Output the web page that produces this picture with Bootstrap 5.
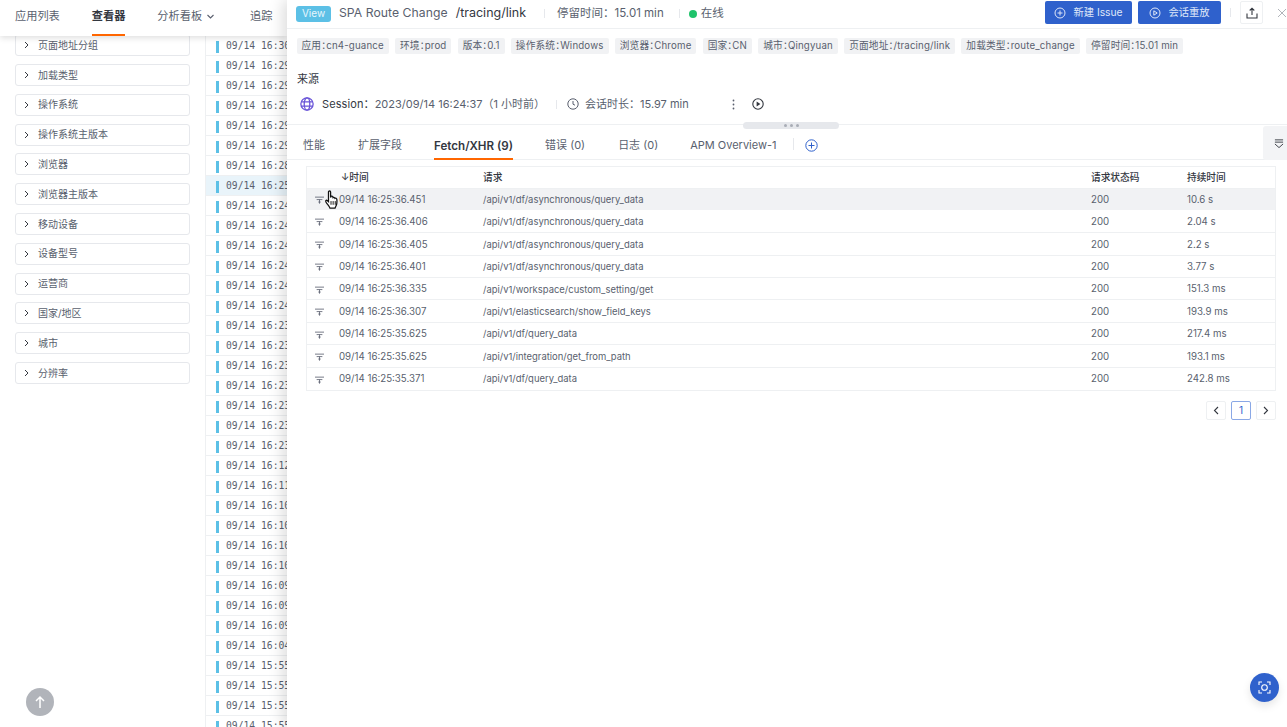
<!DOCTYPE html>
<html lang="zh-CN">
<head>
  <meta charset="UTF-8">
  <meta name="viewport" content="width=device-width, initial-scale=1.0">
  <title>查看器</title>
  <link href="https://cdn.jsdelivr.net/npm/bootstrap@5.3.3/dist/css/bootstrap.min.css" rel="stylesheet">
  <style>
    html, body { height: 727px; overflow: hidden; }
    body { font-family: Inter, "Noto Sans CJK SC", sans-serif; font-size: 10.5px; color: #595f6e; background: #fff; position: relative; }
    svg { display: block; flex: none; }

    /* top nav */
    .top-nav { position: absolute; left: 0; top: 0; width: 287px; height: 36px; background: #fff; box-shadow: 0 2px 6px rgba(0,0,0,.13); z-index: 2; font-size: 11.2px; }
    .top-item { height: 36px; line-height: 33px; white-space: nowrap; }
    .top-item.on { color: #33373f; font-weight: 600; border-bottom: 2px solid #ff6600; }

    /* left filters */
    .filter-side { width: 205px; flex: none; padding: 34.3px 15px 0; }
    .filter-box { height: 22px; margin-bottom: 7.8px; border: 1px solid #e6e8ec; border-radius: 3px; padding-left: 8px; gap: 9px; font-size: 10px; }

    /* log list */
    .log-side { width: 82px; flex: none; padding-top: 36px; border-left: 1px solid #eef0f2; }
    .log-row { height: 20px; padding: 2px 0 0 10px; gap: 7px; border-bottom: 1px solid #eef0f2; font-family: "DejaVu Sans Mono", monospace; font-size: 9.7px; white-space: pre; }
    .log-row.sel { background: #e9f4fa; }
    .log-bar { width: 3px; height: 12px; flex: none; background: #5cc0e6; }

    /* drawer */
    .drawer { position: absolute; left: 287px; top: 0; width: 1000px; height: 727px; background: #fff; box-shadow: -4px 0 14px rgba(0,0,0,.14); z-index: 3; }
    .drawer-head { height: 29px; padding: 0 0 1px 9px; border-bottom: 1px solid #eef0f2; font-size: 11.5px; white-space: nowrap; }
    .view-tag { width: 35px; height: 16px; line-height: 15px; margin-right: 8px; text-align: center; color: #e8f6fc; background: #5cc0e6; border-radius: 3px; font-size: 10px; }
    .head-title { font-size: 12.2px; letter-spacing: .05px; }
    .head-path { font-size: 12.5px; color: #33373f; margin-left: 8px; }
    .head-sep { width: 1px; height: 9px; background: #e6e8ec; }
    .online-dot { width: 8px; height: 8px; border-radius: 50%; background: #1fc36b; }
    .head-right { align-self: flex-start; margin-top: 1px; }
    .blue-btn { height: 23px; padding: 0; gap: 7px; border-radius: 2px; background: #2f61cc; color: #dfe7f8; border: 0; font-size: 10.3px; }
    .share-btn { width: 23px; height: 23px; border: 1px solid #eef0f2; border-radius: 2px; }
    .sep-a { margin-left: 18px; }
    .stay-text { margin-left: 12px; }
    .sep-b { margin-left: 15px; }
    .dot-gap { margin-left: 9px; }
    .online-text { margin-left: 4px; }

    .tag-row { padding: 9px 0 0 9.5px; gap: 6.2px; white-space: nowrap; }
    .field-tag { height: 16px; line-height: 16px; padding: 0 5px; background: #f1f2f4; border-radius: 2px; font-size: 9.7px; letter-spacing: .16px; font-feature-settings: "halt"; }
    .src-title { margin: 17px 0 0 10px; font-size: 11px; color: #33373f; line-height: 16px; }
    .src-row { height: 20px; margin-top: 7px; padding-left: 13px; font-size: 11px; white-space: nowrap; }
    .src-label { margin-left: 8px; color: #33373f; letter-spacing: .1px; }

    .drag-bar { height: 0; border-top: 1px solid #eef0f2; margin-top: 10px; position: relative; }
    .drag-handle { position: absolute; left: 456px; top: -3px; width: 96px; height: 7px; border-radius: 4px; background: #e6e8ec; gap: 3px; }
    .drag-handle i { width: 3px; height: 3px; border-radius: 50%; background: #a9adb6; }

    .tab-row { height: 35px; border-bottom: 1px solid #eef0f2; padding-left: 16px; font-size: 11px; white-space: nowrap; position: relative; }
    .tab-item { height: 35px; line-height: 41px; }
    .tab-item.on { color: #33373f; font-weight: 600; font-size: 11.6px; line-height: 42px; border-bottom: 2px solid #ff6600; }
    .collapse-tab { position: absolute; right: 0; top: 1px; width: 24px; height: 34px; padding-right: 3px; background: #f3f4f6; border-radius: 3px 0 0 3px; }

    .trace-wrap { margin: 6px 11px 0 19px; border: 1px solid #eef0f2; }
    .trace-table { width: 100%; margin: 0; table-layout: fixed; font-size: 9.7px; color: #595f6e; }
    .trace-table th, .trace-table td { padding: 2px 0 0; border-bottom: 1px solid #eef0f2; vertical-align: middle; white-space: nowrap; background: transparent; color: inherit; box-shadow: none; }
    .trace-table th { height: 21px; font-weight: 500; color: #33373f; }
    .trace-table td { height: 22.4px; }
    .trace-table tr:last-child td { border-bottom: 0; }
    .trace-table tr.hot td { background: #f1f2f4; border-bottom: 0; }
    .row-icon { padding-left: 8px !important; }
    .path-cell { font-size: 9.45px; }
    .sort-head { margin-left: 2px; }

    .pager { margin: 10px 11px 0 0; gap: 5px; }
    .pager-btn { width: 20px; height: 19px; border: 1px solid #eef0f2; border-radius: 2px; font-size: 10px; }
    .pager-btn.on { border-color: #8aa8e6; color: #2f61cc; }

    .hand-cursor { position: absolute; left: 325px; top: 190px; z-index: 5; }
    .up-btn { position: absolute; left: 26px; top: 688px; width: 28px; height: 28px; border-radius: 50%; background: #b1b4ba; z-index: 1; }
    .scan-btn { position: absolute; left: 1250px; top: 673px; width: 29px; height: 29px; border-radius: 50%; background: #2f61cc; box-shadow: 0 4px 8px rgba(0,0,0,.1); z-index: 5; }
  </style>
</head>
<body>
  <div class="top-nav d-flex">
    <div class="top-item" style="margin-left:15px">应用列表</div>
    <div class="top-item on" style="margin-left:32px">查看器</div>
    <div class="top-item d-flex" style="margin-left:32px">分析看板
      <svg width="9" height="33" viewBox="0 0 9 33" style="margin-left:4px"><path d="M1.5 15l3 3 3-3" fill="none" stroke="#595f6e" stroke-width="1.1"/></svg>
    </div>
    <div class="top-item" style="margin-left:35px">追踪</div>
  </div>

  <div class="d-flex">
    <div class="filter-side" id="filters"></div>
    <div class="log-side" id="logs"></div>
  </div>

  <div class="up-btn d-flex align-items-center justify-content-center">
    <svg width="12" height="14" viewBox="0 0 12 14"><path d="M6 13V2M2 6l4-4 4 4" fill="none" stroke="#fff" stroke-width="1.5"/></svg>
  </div>

  <div class="drawer">
    <div class="drawer-head d-flex align-items-center">
      <span class="view-tag">View</span>
      <span class="head-title">SPA Route Change</span>
      <span class="head-path">/tracing/link</span>
      <span class="head-sep sep-a"></span>
      <span class="stay-text">停留时间：15.01 min</span>
      <span class="head-sep sep-b"></span>
      <span class="online-dot dot-gap"></span>
      <span class="online-text">在线</span>
      <div class="head-right d-flex align-items-center ms-auto">
        <button class="btn blue-btn d-flex align-items-center justify-content-center" style="width:87px">
          <svg width="12" height="12" viewBox="0 0 12 12"><circle cx="6" cy="6" r="5" fill="none" stroke="#dfe7f8"/><path d="M6 3.5v5M3.5 6h5" stroke="#dfe7f8"/></svg>新建 Issue
        </button>
        <button class="btn blue-btn d-flex align-items-center justify-content-center" style="width:83px;margin-left:6px">
          <svg width="12" height="12" viewBox="0 0 12 12"><circle cx="6" cy="6" r="5" fill="none" stroke="#dfe7f8"/><path d="M4.8 3.8v4.4L8.2 6z" fill="none" stroke="#dfe7f8"/></svg>会话重放
        </button>
        <span class="head-sep" style="margin:0 9px"></span>
        <div class="share-btn d-flex align-items-center justify-content-center">
          <svg width="12" height="12" viewBox="0 0 12 12"><path d="M1 6.5V11h10V6.5M6 8V1.3M3.7 3.5L6 1.2l2.3 2.3" fill="none" stroke="#33373f" stroke-width="1.1"/></svg>
        </div>
        <svg width="10" height="10" viewBox="0 0 10 10" style="margin-left:14px"><path d="M1 1l8 8M9 1l-8 8" stroke="#b1b4ba" stroke-width="1"/></svg>
      </div>
    </div>

    <div class="tag-row d-flex">
      <span class="field-tag">应用：cn4-guance</span>
      <span class="field-tag">环境：prod</span>
      <span class="field-tag">版本：0.1</span>
      <span class="field-tag">操作系统：Windows</span>
      <span class="field-tag">浏览器：Chrome</span>
      <span class="field-tag">国家：CN</span>
      <span class="field-tag">城市：Qingyuan</span>
      <span class="field-tag">页面地址：/tracing/link</span>
      <span class="field-tag">加载类型：route_change</span>
      <span class="field-tag">停留时间：15.01 min</span>
    </div>

    <div class="src-title">来源</div>
    <div class="src-row d-flex align-items-center">
      <svg width="14" height="14" viewBox="0 0 13 13"><g fill="none" stroke="#6a55d8" stroke-width="1.2"><circle cx="6.5" cy="6.5" r="5.7"/><ellipse cx="6.5" cy="6.5" rx="2.6" ry="5.7"/><path d="M1.2 4.6h10.6M1.2 8.4h10.6"/></g></svg>
      <span class="src-label">Session：</span><span>2023/09/14 16:24:37（1 小时前）</span>
      <span class="head-sep" style="margin-left:11px"></span>
      <svg width="12" height="12" viewBox="0 0 12 12" style="margin-left:10px"><circle cx="6" cy="6" r="5.2" fill="none" stroke="#595f6e"/><path d="M6 3v3.2l2 1" fill="none" stroke="#595f6e"/></svg>
      <span style="margin-left:6px">会话时长：15.97 min</span>
      <svg width="3" height="11" viewBox="0 0 3 11" style="margin-left:43px"><g fill="#595f6e"><circle cx="1.5" cy="1.5" r=".9"/><circle cx="1.5" cy="5.5" r=".9"/><circle cx="1.5" cy="9.5" r=".9"/></g></svg>
      <svg width="12" height="12" viewBox="0 0 12 12" style="margin-left:17px"><circle cx="6" cy="6" r="5.2" fill="none" stroke="#33373f" stroke-width="1.1"/><path d="M4.6 3.6v4.8L8.4 6z" fill="#33373f"/></svg>
    </div>

    <div class="drag-bar">
      <div class="drag-handle d-flex align-items-center justify-content-center"><i></i><i></i><i></i></div>
    </div>

    <div class="tab-row d-flex">
      <div class="tab-item">性能</div>
      <div class="tab-item" style="margin-left:33px">扩展字段</div>
      <div class="tab-item on" style="margin-left:32px">Fetch/XHR (9)</div>
      <div class="tab-item" style="margin-left:32px">错误 (0)</div>
      <div class="tab-item" style="margin-left:33px">日志 (0)</div>
      <div class="tab-item" style="margin-left:32px">APM Overview-1</div>
      <span class="head-sep" style="margin:13px 0 0 16px;height:12px"></span>
      <svg width="13" height="13" viewBox="0 0 13 13" style="margin:14px 0 0 11px"><circle cx="6.5" cy="6.5" r="5.7" fill="none" stroke="#2f61cc"/><path d="M6.5 3.5v6M3.5 6.5h6" stroke="#2f61cc"/></svg>
      <div class="collapse-tab d-flex align-items-center justify-content-end">
        <svg width="10" height="11" viewBox="0 0 11 11"><path d="M1 1.5h9M1 4h9M1 6l4.5 4L10 6" fill="none" stroke="#33373f" stroke-width="1"/></svg>
      </div>
    </div>

    <div class="trace-wrap">
      <table class="table trace-table">
        <colgroup><col style="width:32px"><col style="width:144px"><col style="width:608px"><col style="width:96px"><col></colgroup>
        <thead>
          <tr><th></th><th><span class="sort-head">↓时间</span></th><th>请求</th><th>请求状态码</th><th>持续时间</th></tr>
        </thead>
        <tbody id="traces"></tbody>
      </table>
    </div>

    <div class="pager d-flex justify-content-end">
      <div class="pager-btn d-flex align-items-center justify-content-center"><svg width="6" height="9" viewBox="0 0 6 9"><path d="M5 1L1.5 4.5 5 8" fill="none" stroke="#33373f" stroke-width="1.1"/></svg></div>
      <div class="pager-btn on d-flex align-items-center justify-content-center">1</div>
      <div class="pager-btn d-flex align-items-center justify-content-center"><svg width="6" height="9" viewBox="0 0 6 9"><path d="M1 1l3.5 3.5L1 8" fill="none" stroke="#33373f" stroke-width="1.1"/></svg></div>
    </div>
  </div>

  <svg class="hand-cursor" width="15" height="19" viewBox="0 0 14 18"><path d="M3.2 1.8c0-1.3 2-1.3 2 0v5.4l.4-1.2c1-.5 1.8 0 1.8.8l.1.5c.8-.5 1.7-.2 1.8.6.8-.4 1.7 0 1.8 1 .2 2 .2 4-.5 5.6-.4 1-1 1.7-1.2 2.7H4.6c-.4-1.5-1.8-3-3-4.6-.8-1-1.3-2-.9-2.6.5-.6 1.4-.2 2.5 1z" fill="#fff" stroke="#111" stroke-width="1.2"/><path d="M5.6 10.5v3.5M7.6 10.5v3.5M9.6 10.5v3.5" stroke="#111" stroke-width=".9"/></svg>

  <div class="scan-btn d-flex align-items-center justify-content-center">
    <svg width="13" height="13" viewBox="0 0 13 13"><g fill="none" stroke="#fff" stroke-width="1.1"><path d="M1 4V1h3M9 1h3v3M12 9v3H9M4 12H1V9"/><circle cx="6.5" cy="6.5" r="2.8"/></g></svg>
  </div>

  <script>
    var filters = ['页面地址分组', '加载类型', '操作系统', '操作系统主版本', '浏览器', '浏览器主版本', '移动设备', '设备型号', '运营商', '国家/地区', '城市', '分辨率'];
    document.getElementById('filters').innerHTML = filters.map(function (name) {
      return '<div class="filter-box d-flex align-items-center"><svg width="5" height="8" viewBox="0 0 5 8"><path d="M1 1l3 3-3 3" fill="none" stroke="#33373f"/></svg>' + name + '</div>';
    }).join('');

    var logTimes = ['16:30', '16:29', '16:29', '16:29', '16:29', '16:29', '16:28', '16:25', '16:24', '16:24', '16:24', '16:24', '16:24', '16:24', '16:23', '16:23', '16:23', '16:23', '16:23', '16:23', '16:23', '16:12', '16:11', '16:10', '16:10', '16:10', '16:10', '16:09', '16:09', '16:09', '16:04', '15:55', '15:55', '15:55', '15:55'];
    document.getElementById('logs').innerHTML = logTimes.map(function (t) {
      return '<div class="log-row d-flex align-items-center' + (t === '16:25' ? ' sel' : '') + '"><span class="log-bar"></span><span>09/14 ' + t + '</span></div>';
    }).join('');

    var rowIcon = '<svg width="9" height="8" viewBox="0 0 11 9"><path d="M0 1h11M2 4h7M4 7h3M5.5 4v5" fill="none" stroke="#595f6e" stroke-width="1"/></svg>';
    var traces = [
      ['36.451', 'df/asynchronous/query_data', '10.6 s'],
      ['36.406', 'df/asynchronous/query_data', '2.04 s'],
      ['36.405', 'df/asynchronous/query_data', '2.2 s'],
      ['36.401', 'df/asynchronous/query_data', '3.77 s'],
      ['36.335', 'workspace/custom_setting/get', '151.3 ms'],
      ['36.307', 'elasticsearch/show_field_keys', '193.9 ms'],
      ['35.625', 'df/query_data', '217.4 ms'],
      ['35.625', 'integration/get_from_path', '193.1 ms'],
      ['35.371', 'df/query_data', '242.8 ms']
    ];
    document.getElementById('traces').innerHTML = traces.map(function (r, i) {
      return '<tr' + (i === 0 ? ' class="hot"' : '') + '><td class="row-icon">' + rowIcon + '</td><td>09/14 16:25:' + r[0] + '</td><td class="path-cell">/api/v1/' + r[1] + '</td><td>200</td><td>' + r[2] + '</td></tr>';
    }).join('');
  </script>
  <script src="https://cdn.jsdelivr.net/npm/bootstrap@5.3.3/dist/js/bootstrap.bundle.min.js"></script>
</body>
</html>
